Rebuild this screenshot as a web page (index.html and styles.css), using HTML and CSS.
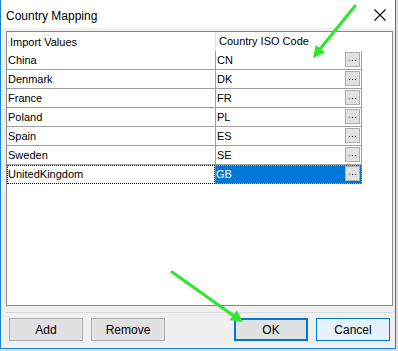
FILE: index.html
```html
<!DOCTYPE html>
<html>
<head>
<meta charset="utf-8">
<link rel="stylesheet" href="styles.css">
</head>
<body>
<div class="window">
  <div class="titlebar">
    <span class="title">Country Mapping</span>
    <svg class="close" width="12" height="12" viewBox="0 0 12 12"><path d="M0.5 0.5 L11.5 11.5 M11.5 0.5 L0.5 11.5" stroke="#000" stroke-width="1.1" fill="none"/></svg>
  </div>
  <div class="content">
    <div class="grid">
      <div class="hdr">
        <div class="h1">Import Values</div>
        <div class="h2">Country ISO Code</div>
      </div>
      <div class="row"><div class="c1">China</div><div class="c2"><span class="val">CN</span><span class="eb"><i></i><i></i><i></i></span></div></div>
      <div class="row"><div class="c1">Denmark</div><div class="c2"><span class="val">DK</span><span class="eb"><i></i><i></i><i></i></span></div></div>
      <div class="row"><div class="c1">France</div><div class="c2"><span class="val">FR</span><span class="eb"><i></i><i></i><i></i></span></div></div>
      <div class="row"><div class="c1">Poland</div><div class="c2"><span class="val">PL</span><span class="eb"><i></i><i></i><i></i></span></div></div>
      <div class="row"><div class="c1">Spain</div><div class="c2"><span class="val">ES</span><span class="eb"><i></i><i></i><i></i></span></div></div>
      <div class="row"><div class="c1">Sweden</div><div class="c2"><span class="val">SE</span><span class="eb"><i></i><i></i><i></i></span></div></div>
      <div class="row sel"><div class="c1">UnitedKingdom</div><div class="c2"><span class="val">GB</span><span class="eb"><i></i><i></i><i></i></span></div></div>
    </div>
    <div class="sep"></div>
    <div class="buttons">
      <div class="left">
        <button class="btn">Add</button>
        <button class="btn">Remove</button>
      </div>
      <div class="right">
        <button class="btn ok">OK</button>
        <button class="btn cancel">Cancel</button>
      </div>
    </div>
  </div>
</div>
<svg class="arrows" width="398" height="351" viewBox="0 0 398 351">
  <line x1="355" y1="6" x2="320" y2="49" stroke="#2ee62e" stroke-width="3" stroke-linecap="round"/>
  <polygon points="313,58 325.2,52.5 315.8,44.9" fill="#2ee62e"/>
  <line x1="172" y1="272" x2="234" y2="316" stroke="#2ee62e" stroke-width="3" stroke-linecap="round"/>
  <polygon points="243,322 229.7,320 236.7,310.2" fill="#2ee62e"/>
</svg>
</body>
</html>
```
FILE: styles.css
```css
html, body {
  margin: 0;
  padding: 0;
}
body {
  width: 398px;
  height: 351px;
  background: #dcdcdc;
  position: relative;
  font-family: "Liberation Sans", Arial, sans-serif;
  color: #000;
  overflow: hidden;
}
.window {
  width: 396px;
  height: 349px;
  box-sizing: border-box;
  border: 1px solid #1883d7;
  border-top: none;
  background: #f0f0f0;
  display: flex;
  flex-direction: column;
}
.titlebar {
  height: 28px;
  background: #fff;
  display: flex;
  align-items: center;
  padding-left: 5px;
  padding-right: 9px;
  flex-shrink: 0;
}
.title {
  font-size: 12px;
  flex: 1;
  margin-top: 3px;
}
.close {
  margin-top: 2px;
}
.content {
  flex: 1;
  display: flex;
  flex-direction: column;
  padding: 3px 2px 7px 5px;
}
.grid {
  width: 387px;
  height: 275px;
  box-sizing: border-box;
  border: 1px solid #828790;
  background: #fff;
  font-size: 11px;
}
.hdr {
  display: flex;
  height: 19px;
  align-items: center;
}
.h1 {
  width: 208px;
  padding-left: 3px;
  box-sizing: border-box;
}
.h2 {
  padding-left: 3px;
  border-left: 1px solid #e3e3e3;
  height: 19px;
  line-height: 19px;
}
.row {
  display: flex;
  height: 19px;
}
.c1 {
  width: 208px;
  box-sizing: border-box;
  border-bottom: 1px solid #a0a0a0;
  padding-left: 1px;
  line-height: 18px;
}
.c2 {
  width: 147px;
  box-sizing: border-box;
  border-left: 1px solid #a0a0a0;
  border-right: 1px solid #a0a0a0;
  border-bottom: 1px solid #a0a0a0;
  display: flex;
  align-items: flex-start;
  padding-left: 1px;
  line-height: 18px;
}
.val {
  flex: 1;
}
.eb {
  width: 15px;
  height: 15px;
  box-sizing: border-box;
  margin: 1px 1px 0 0;
  background: #e1e1e1;
  border: 1px solid #adadad;
  display: flex;
  justify-content: center;
  align-items: center;
  gap: 2px;
  padding-top: 1px;
}
.eb i {
  display: block;
  width: 1px;
  height: 1px;
  background: #000;
}
.sel .c1 {
  border: 1px dotted #000;
  line-height: 17px;
  padding-left: 0;
}
.sel .c2 {
  background: #0078d7;
  color: #fff;
  border: 1px dotted #f08a24;
  line-height: 17px;
  padding-left: 0;
}
.sel .eb {
  margin-top: 0;
}
.sep {
  height: 1px;
  background: #d8d8d8;
  margin-top: 6px;
}
.buttons {
  margin-top: 5px;
  display: flex;
  justify-content: space-between;
  padding-left: 3px;
  padding-right: 3px;
}
.left, .right {
  display: flex;
  gap: 8px;
}
.btn {
  width: 74px;
  height: 23px;
  box-sizing: border-box;
  background: #e1e1e1;
  border: 1px solid #adadad;
  font-family: "Liberation Sans", Arial, sans-serif;
  font-size: 12px;
  color: #000;
  padding: 0;
  margin: 0;
}
.ok {
  border: 2px solid #0078d7;
}
.cancel {
  border: 1px solid #0078d7;
  background: #e5f1fb;
}
.arrows {
  position: absolute;
  left: 0;
  top: 0;
  pointer-events: none;
}
```
